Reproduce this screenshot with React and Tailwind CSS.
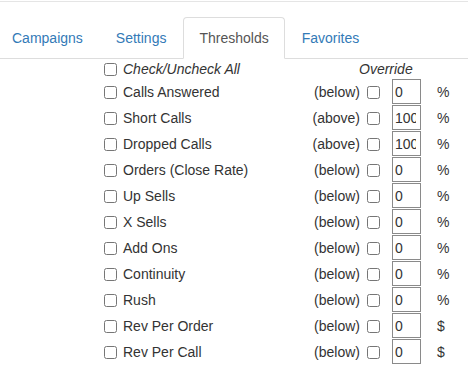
const tabs = ['Campaigns', 'Settings', 'Thresholds', 'Favorites'];

const rows = [
  { label: 'Calls Answered', dir: '(below)', value: '0', unit: '%' },
  { label: 'Short Calls', dir: '(above)', value: '100', unit: '%' },
  { label: 'Dropped Calls', dir: '(above)', value: '100', unit: '%' },
  { label: 'Orders (Close Rate)', dir: '(below)', value: '0', unit: '%' },
  { label: 'Up Sells', dir: '(below)', value: '0', unit: '%' },
  { label: 'X Sells', dir: '(below)', value: '0', unit: '%' },
  { label: 'Add Ons', dir: '(below)', value: '0', unit: '%' },
  { label: 'Continuity', dir: '(below)', value: '0', unit: '%' },
  { label: 'Rush', dir: '(below)', value: '0', unit: '%' },
  { label: 'Rev Per Order', dir: '(below)', value: '0', unit: '$' },
  { label: 'Rev Per Call', dir: '(below)', value: '0', unit: '$' },
];

function Check() {
  return <input type="checkbox" className="m-0 h-[13px] w-[13px] shrink-0" />;
}

export default function App() {
  return (
    <div className="h-[373px] w-[468px] overflow-hidden bg-white text-[14px] leading-[20px] text-[#333]" style={{ fontFamily: '"Liberation Sans", Arial, sans-serif' }}>
      <div className="mt-px h-px bg-[#e5e5e5]" />

      <ul className="mt-[15px] flex border-b border-[#ddd]">
        {tabs.map((tab, i) => (
          <li key={tab} className={'-mb-px mr-[1px] ' + (i === 0 ? '-ml-[4px]' : '')}>
            <span
              className={
                'block rounded-t-[4px] border px-[15px] py-[10px] ' +
                (tab === 'Thresholds'
                  ? 'border-[#ddd] border-b-transparent bg-white text-[#555]'
                  : 'border-transparent text-[#337ab7]')
              }
            >
              {tab}
            </span>
          </li>
        ))}
      </ul>

      <div className="pl-[104px]">
        <div className="flex h-[20px] items-center">
          <div className="flex w-[196px] items-center">
            <Check />
            <span className="ml-[6px] italic">Check/Uncheck All</span>
          </div>
          <span className="ml-[59px] italic">Override</span>
        </div>

        {rows.map((row) => (
          <div key={row.label} className="flex h-[26px] items-center">
            <div className="flex w-[196px] items-center">
              <Check />
              <span className="ml-[6px] whitespace-nowrap">{row.label}</span>
            </div>
            <span className="w-[60px] text-right">{row.dir}</span>
            <span className="ml-[7px] flex">
              <Check />
            </span>
            <input
              readOnly
              value={row.value}
              className="ml-[12px] h-[25px] w-[29px] self-start border border-[#8a8a8a] pl-[2px] pr-[4px] text-[14px] text-[#333] outline-none"
            />
            <span className="ml-[16px]">{row.unit}</span>
          </div>
        ))}
      </div>
    </div>
  );
}
